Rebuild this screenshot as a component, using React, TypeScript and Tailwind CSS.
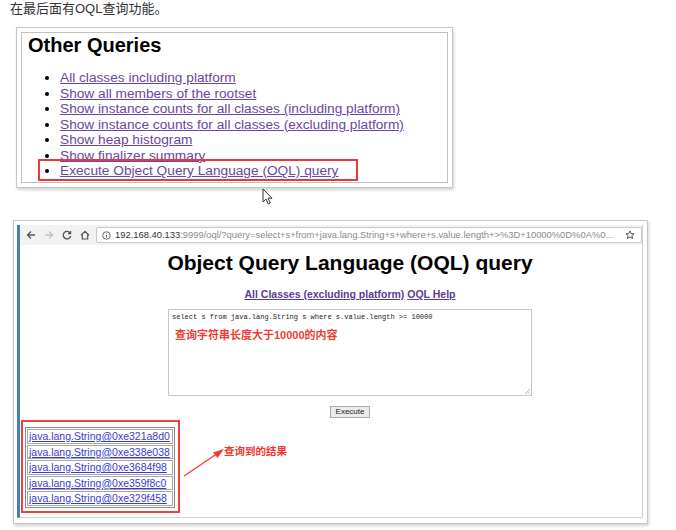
import React from "react";

const sans = "font-['Liberation_Sans','Noto_Sans_CJK_SC',sans-serif]";

const queries = [
  "All classes including platform",
  "Show all members of the rootset",
  "Show instance counts for all classes (including platform)",
  "Show instance counts for all classes (excluding platform)",
  "Show heap histogram",
  "Show finalizer summary",
];

const results = [
  "java.lang.String@0xe321a8d0",
  "java.lang.String@0xe338e038",
  "java.lang.String@0xe3684f98",
  "java.lang.String@0xe359f8c0",
  "java.lang.String@0xe329f458",
];

function Toolbar() {
  return (
    <div className="flex h-[20px] items-center bg-[#f2f2f2]">
      <div className="flex w-[76px] items-center gap-[8px] pl-[6px] text-[#555]">
        <svg width="10" height="10" viewBox="0 0 10 10" fill="none" stroke="#555" strokeWidth="1.3">
          <path d="M9 5H1.5M5 1.5L1.5 5L5 8.5" />
        </svg>
        <svg width="10" height="10" viewBox="0 0 10 10" fill="none" stroke="#c4c4c4" strokeWidth="1.3">
          <path d="M1 5h7.5M5 1.5L8.5 5L5 8.5" />
        </svg>
        <svg width="10" height="10" viewBox="0 0 10 10" fill="none" stroke="#555" strokeWidth="1.3">
          <path d="M8.3 3.2A3.8 3.8 0 1 0 8.7 6" />
          <path d="M8.6 1v2.6H6" />
        </svg>
        <svg width="10" height="10" viewBox="0 0 10 10" fill="none" stroke="#555" strokeWidth="1.2">
          <path d="M1 5.2L5 1.3l4 3.9M2.3 4.2V9h5.4V4.2" />
        </svg>
      </div>
      <div className="flex h-[16px] flex-1 items-center rounded-[2px] border border-[#c9c9c9] bg-white pl-[5px] pr-[6px]">
        <svg width="9" height="9" viewBox="0 0 10 10" fill="none" stroke="#555" strokeWidth="1">
          <circle cx="5" cy="5" r="4.2" />
          <path d="M5 4.3v3M5 2.6v.8" />
        </svg>
        <span className={`ml-[4px] flex-1 overflow-hidden whitespace-nowrap text-[9.4px] leading-[14px] text-[#8a8a8a] ${sans}`}>
          <span className="text-[#333]">192.168.40.133</span>
          :9999/oql/?query=select+s+from+java.lang.String+s+where+s.value.length+&gt;%3D+10000%0D%0A%0...
        </span>
        <svg width="10" height="10" viewBox="0 0 10 10" fill="none" stroke="#444" strokeWidth="0.9">
          <path d="M5 .9l1.2 2.6 2.8.3-2.1 1.9.6 2.8L5 7.1 2.5 8.5l.6-2.8L1 3.8l2.8-.3z" />
        </svg>
      </div>
    </div>
  );
}

export default function App() {
  return (
    <div className={`relative h-[530px] w-[676px] overflow-hidden bg-white ${sans}`}>
      <p className="pl-[10px] pt-[1px] text-[13px] leading-[16px] text-[#333]">在最后面有OQL查询功能。</p>

      {/* first screenshot: Other Queries */}
      <div className="ml-[16px] mt-[10px] h-[161px] w-[437px] border border-[#c6c6c6] bg-white p-[4px] shadow-[1px_2px_3px_rgba(0,0,0,0.18)]">
        <div className="h-full border border-[#c0c0c0] pl-[6px]">
          <h2 className="text-[20px] font-bold leading-[24px] text-black">Other Queries</h2>
          <ul className="mt-[13px] list-disc pl-[32px] text-[13.7px] leading-[15.5px] text-[#6b45a3] marker:text-black">
            {queries.map((q) => (
              <li key={q}>
                <span className="underline">{q}</span>
              </li>
            ))}
            <li className="relative">
              <span className="underline">Execute Object Query Language (OQL) query</span>
              <span className="absolute left-[-22px] top-[-4px] h-[22px] w-[320px] border-2 border-[#e5393a]" />
            </li>
          </ul>
        </div>
      </div>

      {/* second screenshot: OQL page */}
      <div className="ml-[13px] mt-[32px] h-[304px] w-[635px] border border-[#c6c6c6] bg-white pb-[5px] pl-[3px] pr-[4px] pt-[4px] shadow-[1px_2px_3px_rgba(0,0,0,0.18)]">
        <div className="flex h-full flex-col border-b border-l-[3px] border-r border-[#d0d0d0] border-l-[#4a7db0]">
          <Toolbar />
          <div className="flex-1 bg-white">
            <div className="flex flex-col items-center pl-[38px]">
              <h1 className="mt-[5px] text-[21px] font-bold leading-[26px] text-black">Object Query Language (OQL) query</h1>
              <p className="mt-[12px] text-[10.5px] font-bold leading-[12px] text-[#5b3a9a]">
                <span className="underline">All Classes (excluding platform)</span>{" "}
                <span className="underline">OQL Help</span>
              </p>
              <div className="relative mt-[9px] h-[87px] w-[364px] border border-[#c8c8c8] px-[3px] pt-[2px]">
                <p className="font-['Liberation_Mono',monospace] text-[7px] leading-[10px] text-[#222]">
                  select s from java.lang.String s where s.value.length &gt;= 10000
                </p>
                <p className="mt-[6px] pl-[3px] text-[11px] font-bold leading-[14px] text-[#f03c32]">查询字符串长度大于10000的内容</p>
                <svg className="absolute bottom-[1px] right-[1px]" width="6" height="6" viewBox="0 0 6 6" stroke="#aaa" strokeWidth="0.8">
                  <path d="M6 1L1 6M6 3.5L3.5 6" />
                </svg>
              </div>
              <div className="mt-[10px] flex h-[12px] w-[40px] items-center justify-center border border-[#a9a9a9] bg-[#ececec] text-[8px] leading-[10px] text-[#222]">
                Execute
              </div>
            </div>

            <div className="ml-[1px] mt-[2px] flex h-[93px] w-[159px] items-start border-2 border-[#e8443a] pl-[2px] pt-[5px]">
              <div className="flex flex-col gap-[1px] border border-[#8a8a8a] p-[1px]">
                {results.map((r) => (
                  <div key={r} className="h-[14.5px] border border-[#a8a8a8] pl-[1px] pr-[2px] text-[10.5px] leading-[13px] text-[#3a3ad8]">
                    <span className="underline">{r}</span>
                  </div>
                ))}
              </div>
            </div>
          </div>
        </div>
      </div>

      {/* annotation arrow and label */}
      <svg className="absolute left-[180px] top-[440px]" width="50" height="42" viewBox="0 0 50 42">
        <path d="M4 36L38 13" stroke="#ee3a30" strokeWidth="1.3" />
        <path d="M44 9L33 12.5l4.5 5.5z" fill="#ee3a30" />
      </svg>
      <span className="absolute left-[224px] top-[445px] text-[10.5px] font-bold leading-[12px] text-[#ee3a30]">查询到的结果</span>

      {/* mouse cursor */}
      <svg className="absolute left-[262px] top-[188px]" width="12" height="17" viewBox="0 0 12 17">
        <path d="M1 1v13l3-3 2.3 5 2-1-2.3-4.8H10z" fill="white" stroke="#333" strokeWidth="1" />
      </svg>
    </div>
  );
}
